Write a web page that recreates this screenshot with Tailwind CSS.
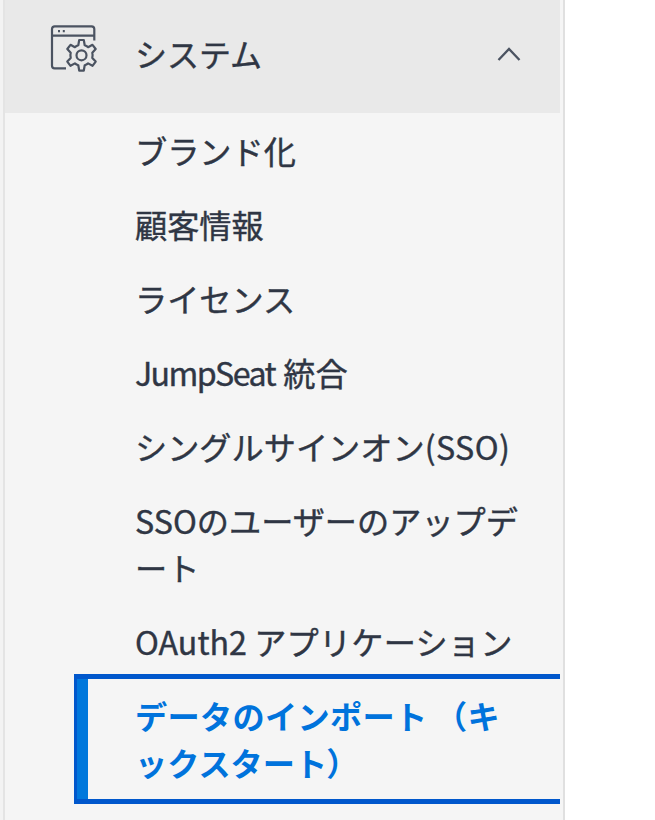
<!DOCTYPE html>
<html lang="ja">
<head>
<meta charset="utf-8">
<title>システム</title>
<script src="https://cdn.jsdelivr.net/npm/@tailwindcss/browser@4"></script>
</head>
<body class="h-[820px] w-[655px] overflow-hidden bg-white font-['Noto_Sans_CJK_JP',sans-serif] text-[32.2px] leading-[46.5px] text-[#2f3644]">
<div class="flex h-[820px] w-[565px] bg-[#f5f5f5]">
<div class="w-[3px] bg-[#f3f3f3]"></div>
<nav class="flex h-[820px] w-[562px] flex-col overflow-hidden border-r-2 border-l-2 border-r-[#e0e0e0] border-l-[#e4e4e4]">
  <button class="flex h-[113px] w-[555px] shrink-0 items-start bg-[#e9e9e9] text-left">
    <svg class="mt-[24px] ml-[45px] h-[50px] w-[50px] shrink-0" viewBox="0 0 50 50" fill="none" stroke="#4b5361" stroke-width="2.2" stroke-linejoin="round">
      <path d="M16 44.3H4.5Q2 44.3 2 41.8V5Q2 2.3 4.7 2.3H41.5Q44.3 2.3 44.3 5V16.5M2 11.6H44.3"/>
      <path d="M8 7.2h2M12.8 7.2h2" stroke-width="2.2"/>
      <path d="M29.2 16h4.6l.9 5.300q1.800.5 3.400 1.900l4.400-2.400 3.200 4.200-3.400 3.700q.7 2.600 0 5.200l3.400 3.700-3.200 4.200-4.400-2.400q-1.600 1.400-3.400 1.900l-.9 5.300h-4.600l-.9-5.300q-1.800-.5-3.400-1.900l-4.400 2.400-3.200-4.200 3.400-3.700q-.7-2.600 0-5.200l-3.400-3.700 3.200-4.200 4.400 2.400q1.600-1.400 3.400-1.900z"/>
      <circle cx="31.5" cy="31.3" r="5"/>
    </svg>
    <span class="mt-[30px] ml-[35px] w-[362px] text-[32px] [-webkit-text-stroke:0.4px_#2f3644]">システム</span>
    <svg class="mt-[46px] h-[16px] w-[24px]" viewBox="0 0 24 16" fill="none" stroke="#4b5361" stroke-width="2.3"><path d="M1.5 14 12 3l10.5 11"/></svg>
  </button>
  <ul class="flex w-[555px] flex-col pt-[14px] pl-[130px] whitespace-nowrap [-webkit-text-stroke:0.4px_currentColor]">
    <li class="mb-[27.5px]">ブランド化</li>
    <li class="mb-[27.5px]">顧客情報</li>
    <li class="mb-[27.5px]">ライセンス</li>
    <li class="mb-[27.5px]"><span class="tracking-[-1.6px]">JumpSeat</span><span class="tracking-[1px]"> </span>統合</li>
    <li class="mb-[27.5px]">シングルサインオン<span class="tracking-[0.4px]">(SSO)</span></li>
    <li class="mb-[27.5px]">SSOのユーザーのアップデ<br>ート</li>
    <li class="mb-[9.5px]">OAuth2 <span class="tracking-[0.2px]">アプリケーション</span></li>
    <li class="-ml-[61px] flex h-[130px] border-y-[5px] border-l-[3px] border-[#0057cc] font-bold text-[#0073dc] [-webkit-text-stroke:0px]">
      <div class="w-[11px] bg-[#0078dc]"></div>
      <div class="pt-[13.5px] pl-[47px]"><span class="tracking-[0.3px]">データのインポート （キ</span><br>ックスタート<span class="-ml-[1px]">）</span></div>
    </li>
  </ul>
</nav>
</div>
</body>
</html>
